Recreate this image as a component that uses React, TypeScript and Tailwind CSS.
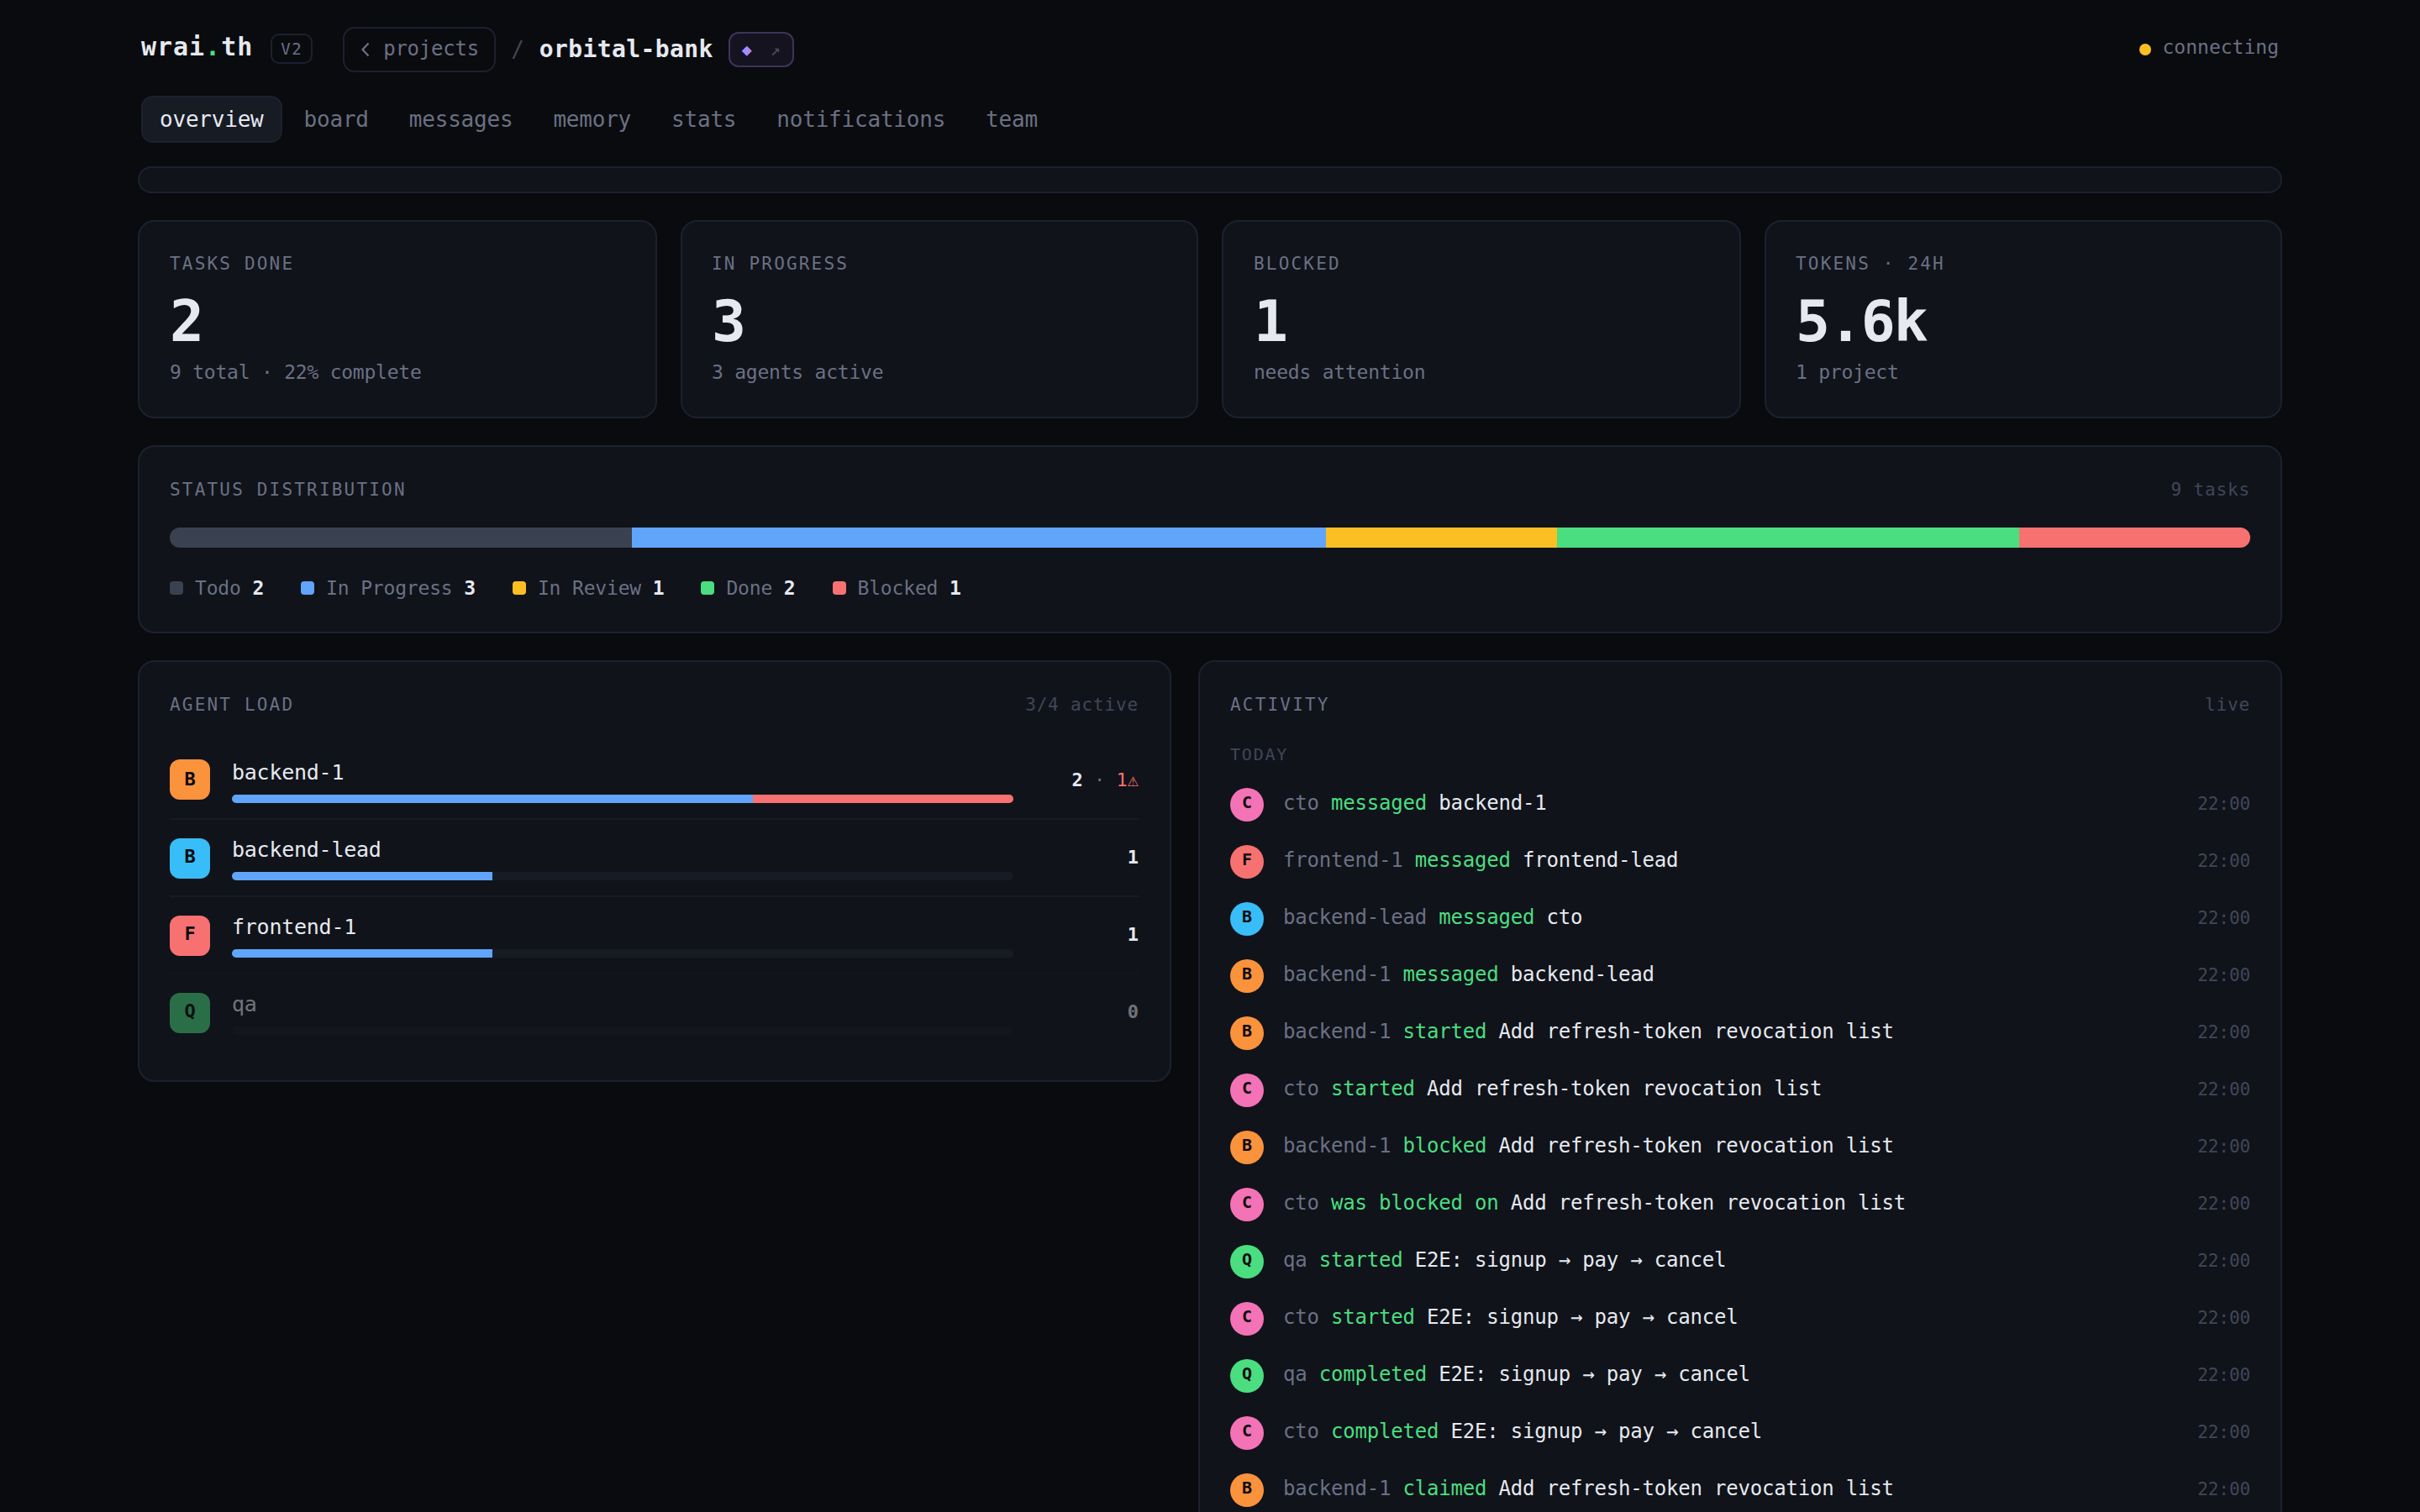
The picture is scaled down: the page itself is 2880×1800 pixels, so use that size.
import type { ReactNode } from "react";

const tabs = ["overview", "board", "messages", "memory", "stats", "notifications", "team"];

const stats = [
  { label: "TASKS DONE", value: "2", sub: "9 total · 22% complete" },
  { label: "IN PROGRESS", value: "3", sub: "3 agents active" },
  { label: "BLOCKED", value: "1", sub: "needs attention" },
  { label: "TOKENS · 24H", value: "5.6k", sub: "1 project" },
];

const statuses = [
  { name: "Todo", count: 2, color: "bg-[#3a4150]" },
  { name: "In Progress", count: 3, color: "bg-[#60a5fa]" },
  { name: "In Review", count: 1, color: "bg-[#fbbf24]" },
  { name: "Done", count: 2, color: "bg-[#4ade80]" },
  { name: "Blocked", count: 1, color: "bg-[#f87171]" },
];

const agentColor: Record<string, string> = {
  "backend-1": "bg-[#fb923c]",
  "backend-lead": "bg-[#38bdf8]",
  "frontend-1": "bg-[#f87171]",
  qa: "bg-[#4ade80]",
  cto: "bg-[#f472b6]",
};

const agents = [
  { name: "backend-1", active: 2, blocked: 1 },
  { name: "backend-lead", active: 1, blocked: 0 },
  { name: "frontend-1", active: 1, blocked: 0 },
  { name: "qa", active: 0, blocked: 0 },
];
const maxLoad = 3;

const activity = [
  ["cto", "messaged", "backend-1"],
  ["frontend-1", "messaged", "frontend-lead"],
  ["backend-lead", "messaged", "cto"],
  ["backend-1", "messaged", "backend-lead"],
  ["backend-1", "started", "Add refresh-token revocation list"],
  ["cto", "started", "Add refresh-token revocation list"],
  ["backend-1", "blocked", "Add refresh-token revocation list"],
  ["cto", "was blocked on", "Add refresh-token revocation list"],
  ["qa", "started", "E2E: signup → pay → cancel"],
  ["cto", "started", "E2E: signup → pay → cancel"],
  ["qa", "completed", "E2E: signup → pay → cancel"],
  ["cto", "completed", "E2E: signup → pay → cancel"],
  ["backend-1", "claimed", "Add refresh-token revocation list"],
];

function Card({ className = "", children }: { className?: string; children?: ReactNode }) {
  return (
    <section className={`rounded-[20px] border-2 border-[#1c2130] bg-[#10131a] ${className}`}>{children}</section>
  );
}

function CardHead({ title, note }: { title: string; note: string }) {
  return (
    <div className="flex h-[30px] items-center justify-between leading-[32px]">
      <h2 className="text-[21px] tracking-[0.104em] text-[#6b7084]">{title}</h2>
      <span className="text-[21px] tracking-[0.04em] text-[#414658]">{note}</span>
    </div>
  );
}

function Header() {
  return (
    <header className="flex h-[54px] items-center px-1">
      <div className="mr-[21px] pb-[6px] text-[30px] leading-[36px] font-bold tracking-[0.032em] text-[#e6e9f0]">
        wrai<span className="text-[#4ade80]">.</span>th
      </div>
      <div className="mr-[36px] -mt-[2px] flex h-[36px] w-[50px] items-center rounded-[10px] border-2 border-[#1c2130] pl-[10px] text-[19px] leading-[32px] tracking-[0.09em] text-[#6b7084]">
        V2
      </div>
      <button className="flex h-[54px] w-[182px] items-center rounded-[14px] border-2 border-[#1c2130] pl-[18px] text-[24px] leading-[46px] tracking-[-0.01em] text-[#6b7084]">
        <svg className="mr-[15px] h-[18px] w-[13px]" viewBox="0 0 13 18" fill="none" stroke="currentColor" strokeWidth="2.2">
          <path d="M10.5 1.5 3.5 9l7 7.5" />
        </svg>
        <span className="-mt-[3px]">projects</span>
      </button>
      <span className="mx-[18px] text-[26px] leading-[50px] text-[#414658]">/</span>
      <h1 className="text-[28px] leading-[50px] font-bold tracking-[0.014em] text-[#e6e9f0]">orbital-bank</h1>
      <div className="ml-[18px] flex h-[42px] w-[78px] items-center justify-between rounded-[12px] border-2 border-[#3d3459] bg-[#15131f] px-[14px]">
        <span className="text-[20px] leading-[30px] text-[#a78bfa]">◆</span>
        <span className="text-[20px] leading-[30px] text-[#4b5066]">↗</span>
      </div>
      <div className="ml-auto flex items-center gap-[14px] text-[23px] text-[#6b7084]">
        <span className="size-[14px] rounded-full bg-[#fbbf24]" />
        <span className="-mt-[6px] leading-[30px]">connecting</span>
      </div>
    </header>
  );
}

function Tabs() {
  return (
    <nav className="mt-[28px] flex gap-1 px-1 text-[26px] leading-[46px] tracking-[-0.008em]">
      {tabs.map((t, i) => (
        <a
          key={t}
          className={`h-[56px] rounded-[14px] border-2 px-[20px] pt-[3px] ${
            i === 0 ? "border-[#1c2130] bg-[#171b24] text-[#e6e9f0]" : "border-transparent text-[#6b7084]"
          }`}
        >
          {t}
        </a>
      ))}
    </nav>
  );
}

function StatusDistribution() {
  return (
    <Card className="mt-8 h-[224px] px-9 pt-[36px]">
      <CardHead title="STATUS DISTRIBUTION" note="9 tasks" />
      <div className="mt-[30px] flex h-6 overflow-hidden rounded-full">
        {statuses.map((s) => (
          <div key={s.name} className={s.color} style={{ flexGrow: s.count }} />
        ))}
      </div>
      <div className="mt-[34px] flex gap-[44px] text-[23px] leading-[28px] tracking-[-0.17px] text-[#6b7084]">
        {statuses.map((s) => (
          <div key={s.name} className="flex items-center gap-[14px]">
            <span className={`size-4 rounded-[4px] ${s.color}`} />
            <span>
              {s.name} <b className="text-[#e6e9f0]">{s.count}</b>
            </span>
          </div>
        ))}
      </div>
    </Card>
  );
}

function AgentLoad() {
  return (
    <Card className="h-[502px] pt-[36px] pr-[37px] pl-9">
      <CardHead title="AGENT LOAD" note="3/4 active" />
      <div className="mt-[30px]">
        {agents.map((a, i) => (
          <div
            key={a.name}
            className={`flex items-start ${i === 0 ? "h-[90px] pt-5" : "h-[92px] border-t-2 border-[#171b24] pt-[22px]"} ${
              a.active === 0 ? "opacity-45" : ""
            }`}
          >
            <div
              className={`size-12 rounded-[12px] text-center text-[22px] font-bold text-[#0a0b0e] ${
                i === 0 ? "leading-[48px]" : "leading-[44px]"
              } ${agentColor[a.name]}`}
            >
              {a.name[0].toUpperCase()}
            </div>
            <div className={`mr-[26px] ml-[26px] flex-1 ${i === 0 ? "" : "-mt-[2px]"}`}>
              <div className="h-[42px] text-[25px] leading-[32px] tracking-[-0.01em] text-[#e6e9f0]">{a.name}</div>
              <div className="flex h-[10px] overflow-hidden rounded-[5px] bg-[#171b24]">
                <div className="bg-[#60a5fa]" style={{ width: `${(a.active / maxLoad) * 100}%` }} />
                <div className="bg-[#f87171]" style={{ width: `${(a.blocked / maxLoad) * 100}%` }} />
              </div>
            </div>
            <div
              className={`w-[123px] text-right text-[22px] leading-[50px] whitespace-nowrap text-[#6b7084] ${
                i === 0 ? "" : "-mt-[2px]"
              }`}
            >
              <b className="text-[#e6e9f0]">{a.active}</b>
              {a.blocked > 0 && (
                <>
                  {" · "}
                  <span className="text-[#f87171]">{a.blocked}⚠</span>
                </>
              )}
            </div>
          </div>
        ))}
      </div>
    </Card>
  );
}

function Activity() {
  return (
    <Card className="h-[1200px] px-9 pt-[36px]">
      <CardHead title="ACTIVITY" note="live" />
      <div className="mt-[30px] h-[52px] text-[20px] leading-[28px] tracking-[0.09em] text-[#414658]">TODAY</div>
      {activity.map(([who, verb, what], i) => (
        <div key={i} className="flex h-[68px] items-start text-[24px] leading-[40px] tracking-[-0.2px]">
          <div
            className={`mt-[2px] mr-[23px] size-10 rounded-full text-center text-[20px] leading-[34px] font-bold text-[#0a0b0e] ${agentColor[who]}`}
          >
            {who[0].toUpperCase()}
          </div>
          <div className="flex-1 text-[#e6e9f0]">
            <span className="text-[#6b7084]">{who}</span> <span className="text-[#4ade80]">{verb}</span> {what}
          </div>
          <time className="text-[21px] leading-[42px] tracking-[-0.1px] text-[#414658]">22:00</time>
        </div>
      ))}
    </Card>
  );
}

export default function App() {
  return (
    <div className="h-[1800px] w-[2880px] overflow-hidden bg-[#0a0b0e] px-[164px] pt-8 font-['Menlo','DejaVu_Sans_Mono',monospace]">
      <Header />
      <Tabs />
      <Card className="mt-[28px] h-8" />
      <div className="mt-8 grid grid-cols-[618fr_616fr_618fr_616fr] gap-[28px]">
        {stats.map((s) => (
          <Card key={s.label} className="h-[236px] px-9 pt-[34px] even:pl-[35px]">
            <div className="text-[21px] leading-[32px] tracking-[0.104em] text-[#6b7084]">{s.label}</div>
            <div className="mt-[17px] h-[72px] text-[68px] leading-[72px] font-bold tracking-[-0.03em] text-[#e6e9f0]">
              {s.value}
            </div>
            <div className="mt-[4px] text-[23px] leading-[40px] tracking-[-0.01em] text-[#6b7084]">{s.sub}</div>
          </Card>
        ))}
      </div>
      <StatusDistribution />
      <div className="mt-8 grid grid-cols-[1230fr_1290fr] items-start gap-8">
        <AgentLoad />
        <Activity />
      </div>
    </div>
  );
}
